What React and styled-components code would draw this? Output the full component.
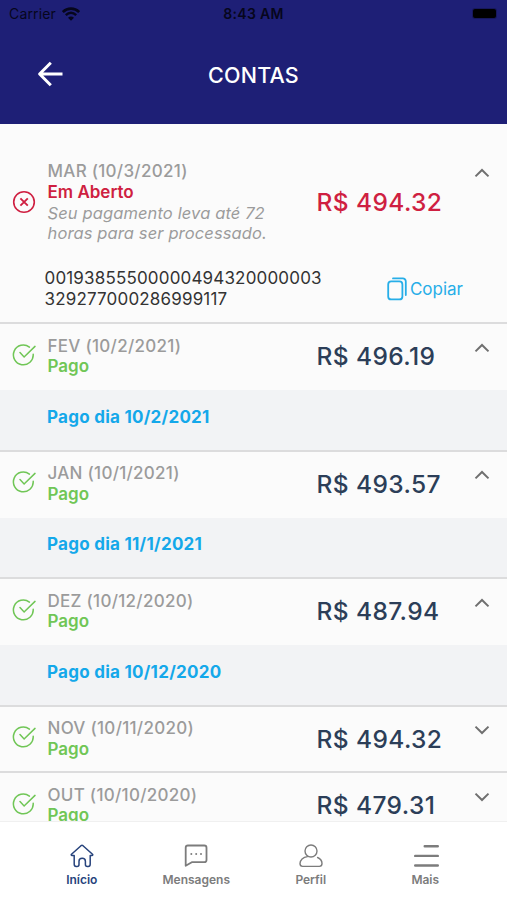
import React from "react";
import styled, { createGlobalStyle } from "styled-components";

const bills = [
  {
    month: "MAR (10/3/2021)",
    value: "R$ 494.32",
    open: true,
    due: true,
    code: ["00193855500000494320000003", "329277000286999117"],
  },
  { month: "FEV (10/2/2021)", value: "R$ 496.19", open: true, paid: "Pago dia 10/2/2021" },
  { month: "JAN (10/1/2021)", value: "R$ 493.57", open: true, paid: "Pago dia 11/1/2021" },
  { month: "DEZ (10/12/2020)", value: "R$ 487.94", open: true, paid: "Pago dia 10/12/2020" },
  { month: "NOV (10/11/2020)", value: "R$ 494.32" },
  { month: "OUT (10/10/2020)", value: "R$ 479.31" },
];

function WifiIcon() {
  return (
    <svg width="18" height="14" viewBox="0 0 18 14" fill="none" stroke="#06061c">
      <path d="M.8 5C5.3 .6 12.7 .6 17.2 5" strokeWidth="2.7" />
      <path d="M3.8 8.1C7 5.2 11 5.2 14.2 8.1" strokeWidth="2.5" />
      <path d="M9 13.8 6 10.7C7.8 9 10.2 9 12 10.7Z" fill="#06061c" stroke="none" />
    </svg>
  );
}

function BackIcon() {
  return (
    <svg width="26" height="26" viewBox="0 0 26 26" fill="none" stroke="#fff" strokeWidth="3">
      <path d="M25.5 13H3M13.8 1.8 2.6 13 13.8 24.2" strokeLinejoin="round" />
    </svg>
  );
}

function StatusIcon({ due }) {
  if (due) {
    return (
      <svg width="24" height="24" viewBox="0 0 24 24" fill="none" stroke="#cf1f41" strokeWidth="1.6">
        <circle cx="12" cy="12" r="10.3" />
        <path d="M8.4 8.4 15.8 15.6M15.8 8.4 8.4 15.6" strokeWidth="1.9" />
      </svg>
    );
  }
  return (
    <svg width="24" height="24" viewBox="0 0 24 24" fill="none" stroke="#70c656" strokeWidth="1.5">
      <path d="M17.4 4.1A9.9 9.9 0 1 0 21.2 11.2" strokeLinecap="round" />
      <path d="M8 9.6 12.1 14 23 3.4" strokeLinecap="round" />
    </svg>
  );
}

function CopyIcon() {
  return (
    <svg width="20" height="24" viewBox="0 0 20 24" fill="none" stroke="#27aee8" strokeWidth="1.8">
      <rect x="1.2" y="4.4" width="14.2" height="18" rx="3" />
      <path d="M6 1.4H15.5A3 3 0 0 1 18.8 4.6V18" strokeLinecap="round" />
    </svg>
  );
}

function Chevron({ up }) {
  return (
    <svg width="16" height="10" viewBox="0 0 16 10" fill="none" stroke="#6f6f6f" strokeWidth="2">
      <path d={up ? "M1.5 8.4 8 2 14.5 8.4" : "M1.5 1.6 8 8 14.5 1.6"} />
    </svg>
  );
}

function HomeIcon() {
  return (
    <svg width="24" height="24" viewBox="0 0 24 24" fill="none" stroke="currentColor" strokeWidth="1.5" strokeLinejoin="round" strokeLinecap="round">
      <path d="M4.2 11.5H2C1.2 11.5 1 10.8 1.5 10.3L11 1.7Q12 .9 13 1.7L22.5 10.3C23 10.8 22.8 11.5 22 11.5H20.2V20.3Q20.2 22.4 18.2 22.4H17.4Q15.4 22.4 15.4 20.4V17.2Q15.4 14.2 12.2 14.2T9 17.2V20.4Q9 22.4 7 22.4H6.2Q4.2 22.4 4.2 20.3Z" />
    </svg>
  );
}

function MessageIcon() {
  return (
    <svg width="24" height="24" viewBox="0 0 24 24" fill="none" stroke="currentColor" strokeWidth="1.8" strokeLinejoin="round">
      <path d="M1.7 21.8V3.7Q1.7 1.5 3.9 1.5H20.3Q22.5 1.5 22.5 3.7V16Q22.5 18.2 20.3 18.2H7.8Z" />
      <g fill="currentColor" stroke="none">
        <circle cx="7.3" cy="10" r="1" />
        <circle cx="12.2" cy="10" r="1" />
        <circle cx="17" cy="10" r="1" />
      </g>
    </svg>
  );
}

function ProfileIcon() {
  return (
    <svg width="24" height="24" viewBox="0 0 24 24" fill="none" stroke="currentColor" strokeWidth="1.4" strokeLinecap="round">
      <circle cx="12" cy="7" r="6" />
      <path d="M8.5 12.6C4 13 1 16 1 19.6Q1 22.4 3.6 22.4H20.4Q23 22.4 23 19.6C23 17 21.3 14.6 18.6 13.5" />
    </svg>
  );
}

function MoreIcon() {
  return (
    <svg width="28" height="24" viewBox="0 0 28 24" fill="none" stroke="currentColor" strokeWidth="2.4" strokeLinecap="round">
      <path d="M13.7 2.3H26.8M4.2 11.9H26.8M4.2 21.5H26.8" />
    </svg>
  );
}

function Bill({ bill }) {
  return (
    <Item>
      <Row $due={bill.due} $open={bill.open}>
        <StatusCell $due={bill.due}>
          <StatusIcon due={bill.due} />
        </StatusCell>
        <Info>
          <Month>{bill.month}</Month>
          <Status $due={bill.due}>{bill.due ? "Em Aberto" : "Pago"}</Status>
          {bill.due && (
            <Note>
              Seu pagamento leva até 72
              <br />
              horas para ser processado.
            </Note>
          )}
        </Info>
        <Value $due={bill.due}>{bill.value}</Value>
        <Toggle aria-label={bill.open ? "Fechar" : "Abrir"}>
          <Chevron up={bill.open} />
        </Toggle>
      </Row>
      {bill.code && (
        <Payment>
          <Code>
            {bill.code[0]}
            <br />
            {bill.code[1]}
          </Code>
          <Copy>
            <CopyIcon />
            Copiar
          </Copy>
        </Payment>
      )}
      {bill.paid && <Paid>{bill.paid}</Paid>}
    </Item>
  );
}

export default function App() {
  return (
    <>
      <GlobalStyle />
      <Screen>
        <Header>
          <StatusBar>
            <Carrier>
              Carrier
              <WifiIcon />
            </Carrier>
            <Time>8:43 AM</Time>
            <BatteryCell>
              <Battery />
            </BatteryCell>
          </StatusBar>
          <TitleBar>
            <Back aria-label="Voltar">
              <BackIcon />
            </Back>
            <Title>CONTAS</Title>
          </TitleBar>
        </Header>
        <List>
          {bills.map((bill) => (
            <Bill key={bill.month} bill={bill} />
          ))}
        </List>
        <Tabs>
          <Tab $active>
            <HomeIcon />
            Início
          </Tab>
          <Tab>
            <MessageIcon />
            Mensagens
          </Tab>
          <Tab>
            <ProfileIcon />
            Perfil
          </Tab>
          <Tab>
            <MoreIcon />
            Mais
          </Tab>
        </Tabs>
      </Screen>
    </>
  );
}

const GlobalStyle = createGlobalStyle`
  * {
    box-sizing: border-box;
  }
  body {
    margin: 0;
    font-family: Inter, "Liberation Sans", sans-serif;
  }
  button {
    border: 0;
    padding: 0;
    background: none;
    font: inherit;
    color: inherit;
  }
  svg {
    display: block;
    flex: none;
  }
`;

const Screen = styled.div`
  width: 507px;
  height: 900px;
  display: flex;
  flex-direction: column;
  overflow: hidden;
  background: #fbfbfb;
`;

const Header = styled.header`
  height: 124px;
  flex: none;
  background: #1e1f76;
`;

const StatusBar = styled.div`
  height: 27px;
  display: grid;
  grid-template-columns: 1fr auto 1fr;
  align-items: center;
  padding: 0 9px;
  color: #06061c;
  font-size: 14px;
`;

const Carrier = styled.div`
  display: flex;
  align-items: center;
  gap: 6px;
  letter-spacing: 0.15px;
`;

const Time = styled.div`
  font-weight: 600;
  letter-spacing: 0.35px;
`;

const BatteryCell = styled.div`
  display: flex;
  justify-content: flex-end;
`;

const Battery = styled.div`
  width: 23px;
  height: 9px;
  margin-right: 2px;
  border-radius: 2px;
  background: #000;
  box-shadow: 0 0 0 1px #17185c;
`;

const TitleBar = styled.div`
  height: 96px;
  display: grid;
  grid-template-columns: 100px 1fr 100px;
  align-items: center;
  color: #fff;
`;

const Back = styled.button`
  padding: 0 0 2px 37px;
`;

const Title = styled.h1`
  margin: 0;
  font-size: 21.5px;
  font-weight: 500;
  letter-spacing: 0.2px;
  text-align: center;
`;

const List = styled.main`
  flex: 1;
  min-height: 0;
  overflow: hidden;
`;

const Item = styled.section`
  border-bottom: 2px solid #dcdcdd;
`;

const Row = styled.div`
  display: grid;
  grid-template-columns: 47.5px 269px 1fr 48px;
  align-items: start;
  height: ${(p) => (p.$due ? "129px" : p.$open ? "66px" : "64.4px")};
  padding-top: ${(p) => (p.$due ? "37px" : "11.5px")};
`;

const StatusCell = styled.div`
  padding: ${(p) => (p.$due ? "29px" : "7px")} 0 0 12px;
`;

const Info = styled.div`
  font-size: 17px;
  line-height: 20.8px;
`;

const Month = styled.div`
  color: #9b9b9b;
  font-weight: 550;
  letter-spacing: 0.28px;
`;

const Status = styled.div`
  color: ${(p) => (p.$due ? "#cf1f41" : "#70c656")};
  font-weight: 600;
`;

const Note = styled.div`
  color: #9b9b9b;
  font-size: 16.5px;
  font-style: italic;
  letter-spacing: 0.12px;
`;

const Value = styled.div`
  padding-top: ${(p) => (p.$due ? "25px" : "4.5px")};
  color: ${(p) => (p.$due ? "#cf1f41" : "#2c3e58")};
  font-size: 24.5px;
  font-weight: ${(p) => (p.$due ? 500 : 450)};
  line-height: 32px;
  letter-spacing: 0.4px;
`;

const Toggle = styled.button`
  padding: 7px 0 0 15px;
`;

const Payment = styled.div`
  height: 69px;
  display: flex;
  justify-content: space-between;
  padding: 15px 44px 0 44.5px;
`;

const Code = styled.div`
  color: #333;
  font-size: 17px;
  line-height: 20.8px;
  letter-spacing: 0.17px;
`;

const Copy = styled.button`
  display: flex;
  align-items: center;
  align-self: flex-start;
  gap: 3px;
  padding-top: 9px;
  color: #27aee8;
  font-size: 17px;
`;

const Paid = styled.div`
  height: 59.6px;
  padding: 16.5px 47px;
  background: #f2f3f5;
  color: #14a8ea;
  font-size: 17px;
  font-weight: 700;
  line-height: 21px;
  letter-spacing: 0.26px;
`;

const Tabs = styled.nav`
  height: 79px;
  flex: none;
  display: grid;
  grid-template-columns: repeat(4, 114.5px);
  justify-content: center;
  border-top: 1px solid #f0f0f0;
  background: #fff;
`;

const Tab = styled.button`
  display: flex;
  flex-direction: column;
  align-items: center;
  gap: 4px;
  padding-top: 22px;
  color: ${(p) => (p.$active ? "#27437c" : "#7c7c7c")};
  font-size: 12px;
  font-weight: 600;
  line-height: 16px;
`;
